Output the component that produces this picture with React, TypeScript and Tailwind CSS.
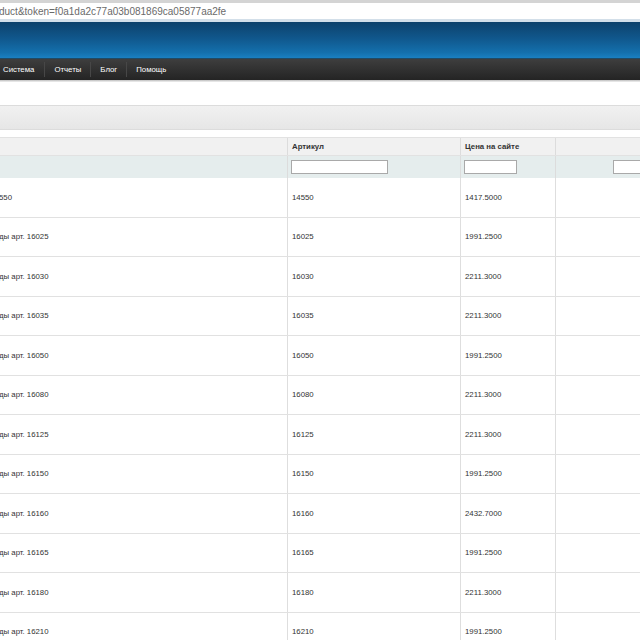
import React from "react";

const rows: [string, string, string][] = [
  ["550", "14550", "1417.5000"],
  ["ды арт. 16025", "16025", "1991.2500"],
  ["ды арт. 16030", "16030", "2211.3000"],
  ["ды арт. 16035", "16035", "2211.3000"],
  ["ды арт. 16050", "16050", "1991.2500"],
  ["ды арт. 16080", "16080", "2211.3000"],
  ["ды арт. 16125", "16125", "2211.3000"],
  ["ды арт. 16150", "16150", "1991.2500"],
  ["ды арт. 16160", "16160", "2432.7000"],
  ["ды арт. 16165", "16165", "1991.2500"],
  ["ды арт. 16180", "16180", "2211.3000"],
  ["ды арт. 16210", "16210", "1991.2500"],
];

const menu = ["Система", "Отчеты", "Блог", "Помощь"];

export default function App() {
  return (
    <div className="w-[640px] h-[640px] overflow-hidden bg-white font-['Liberation_Sans',Arial,sans-serif]">
      {/* browser chrome */}
      <div className="h-[3px] bg-[#d4d4d4]" />
      <div className="h-[16px] flex items-center bg-white text-[10px] text-[#6a6a6a] whitespace-nowrap -ml-[1px]">
        duct&amp;token=f0a1da2c77a03b081869ca05877aa2fe
      </div>
      <div className="h-[3px] bg-[#d3dfe9]" />

      {/* header */}
      <div className="h-[36px] bg-[linear-gradient(to_bottom,#0d416b_0%,#10578c_45%,#1470ad_85%,#1a80c2_100%)]" />
      <div className="h-[1px] bg-[#1f4a66]" />

      {/* menu */}
      <div className="h-[21px] flex items-center bg-[linear-gradient(to_bottom,#3e3e3e,#242424)] text-[7.8px] text-white">
        {menu.map((m, i) => (
          <div key={m} className="flex items-center">
            {i > 0 && <div className="w-[1px] h-[15px] bg-[#1b1b1b] border-r border-[#474747]" />}
            <span className={i === 0 ? "pl-[3px] pr-[10px]" : "px-[9px]"}>{m}</span>
          </div>
        ))}
      </div>
      <div className="h-[2px] bg-[linear-gradient(to_bottom,#bdbdbd,#f2f2f2)]" />

      <div className="h-[23px]" />

      {/* toolbar */}
      <div className="h-[25px] border-y border-[#dcdcdc] bg-[linear-gradient(to_bottom,#f1f1f1,#e6e6e6)]" />
      <div className="h-[7px]" />

      {/* table */}
      <div className="text-[7.8px] text-[#333]">
        <div className="grid grid-cols-[287px_173px_95px_1fr] h-[19px] border-t border-[#dcdcdc] bg-[#f1f1f1] font-bold border-b border-[#e2e2e2]">
          <div />
          <div className="border-l border-[#dcdcdc] flex items-center pl-[4px]">Артикул</div>
          <div className="border-l border-[#dcdcdc] flex items-center pl-[4px]">Цена на сайте</div>
          <div className="border-l border-[#dcdcdc]" />
        </div>
        <div className="grid grid-cols-[287px_173px_95px_1fr] h-[22px] bg-[#e5eded]">
          <div />
          <div className="border-l border-[#dcdcdc] flex items-center pl-[3px]">
            <input className="w-[97px] h-[14px] bg-white border border-[#a9a9a9]" />
          </div>
          <div className="border-l border-[#dcdcdc] flex items-center pl-[3px]">
            <input className="w-[53px] h-[14px] bg-white border border-[#a9a9a9]" />
          </div>
          <div className="border-l border-[#dcdcdc] flex items-center pl-[57px]">
            <input className="w-[60px] h-[14px] bg-white border border-[#a9a9a9]" />
          </div>
        </div>
        {rows.map(([name, sku, price]) => (
          <div
            key={sku}
            className="grid grid-cols-[287px_173px_95px_1fr] h-[39.5px] border-b border-[#e1e1e1]"
          >
            <div className="flex items-center pt-[1px] -ml-[1px] whitespace-nowrap">{name}</div>
            <div className="border-l border-[#dedede] flex items-center pt-[1px] pl-[4px]">{sku}</div>
            <div className="border-l border-[#dedede] flex items-center pt-[1px] pl-[4px]">{price}</div>
            <div className="border-l border-[#dedede]" />
          </div>
        ))}
      </div>
    </div>
  );
}
